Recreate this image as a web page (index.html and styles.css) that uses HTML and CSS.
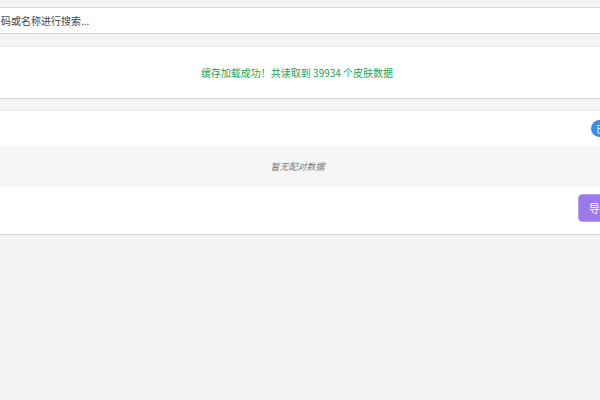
FILE: index.html
```html
<!DOCTYPE html>
<html lang="zh">
<head>
<meta charset="utf-8">
<title>皮肤数据</title>
<link rel="stylesheet" href="styles.css">
</head>
<body>
<div class="page">
  <div class="search"><span class="search-text">码或名称进行搜索...</span></div>
  <div class="notice"><span class="notice-text">缓存加载成功！共读取到 39934 个皮肤数据</span></div>
  <div class="card">
    <div class="card-head"><span class="badge">已配对</span></div>
    <div class="card-empty"><span class="empty-text">暂无配对数据</span></div>
    <div class="card-foot"><button class="btn">导出数据</button></div>
  </div>
</div>
</body>
</html>
```
FILE: styles.css
```css
html, body {
  margin: 0;
  padding: 0;
  background: #f4f4f4;
  overflow: hidden;
}
body {
  font-family: "Noto Sans CJK SC", "Noto Sans", sans-serif;
  width: 600px;
  height: 400px;
}
.page {
  display: flex;
  flex-direction: column;
  padding-top: 7px;
}
.search {
  height: 25px;
  background: #fff;
  border-top: 1px solid #dcdcdc;
  border-bottom: 1px solid #d6d6d6;
  display: flex;
  align-items: center;
  padding-left: 1px;
}
.search-text {
  font-size: 10px;
  color: #444;
}
.notice {
  margin-top: 12px;
  height: 51px;
  background: #fff;
  border-top: 1px solid #ececec;
  border-bottom: 1px solid #d8d8d8;
  display: flex;
  align-items: center;
  justify-content: center;
  padding-right: 6px;
}
.notice-text {
  font-size: 10px;
  color: #25a356;
}
.card {
  margin-top: 11px;
  background: #fff;
  border-bottom: 1px solid #d8d8d8;
  overflow: hidden;
  display: flex;
  flex-direction: column;
}
.card-head {
  height: 36px;
  display: flex;
  align-items: center;
  justify-content: flex-end;
  border-top: 1px solid #ececec;
  box-sizing: border-box;
}
.badge {
  background: #3a8ee0;
  color: #fff;
  font-size: 10px;
  line-height: 17px;
  height: 17px;
  padding: 0 6px 0 5px;
  border-radius: 9px;
  margin-right: -32px;
  white-space: nowrap;
}
.card-empty {
  height: 41px;
  background: #f6f6f6;
  display: flex;
  align-items: center;
  justify-content: center;
  padding-right: 5px;
}
.empty-text {
  font-size: 9px;
  font-style: italic;
  color: #7a7a7a;
}
.card-foot {
  height: 47px;
  display: flex;
  align-items: flex-start;
  justify-content: flex-end;
  padding-top: 7px;
  box-sizing: border-box;
}
.btn {
  font-family: inherit;
  background: #9d78e8;
  color: #fff;
  border: 1px solid #b79cf0;
  border-radius: 4px;
  height: 28px;
  font-size: 11px;
  padding: 0 10px;
  margin-right: -44px;
  white-space: nowrap;
}
```
